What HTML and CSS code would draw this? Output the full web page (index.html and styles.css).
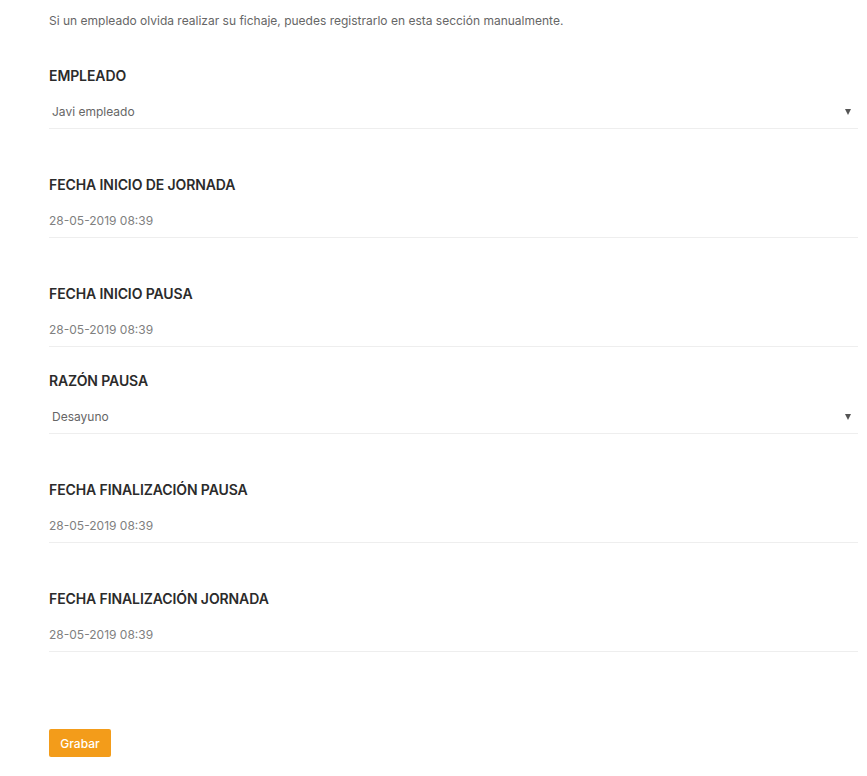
FILE: index.html
```html
<!DOCTYPE html>
<html lang="es">
<head>
<meta charset="utf-8"/>
<title>Fichaje manual</title>
<link rel="stylesheet" href="styles.css">
</head>
<body>
<div id="wrap">
    <p class="intro">Si un empleado olvida realizar su fichaje, puedes registrarlo en esta sección manualmente.</p>

    <form class="fichaje">
        <div class="field">
            <label>EMPLEADO</label>
            <div class="input select"><span>Javi empleado</span><i class="arrow"></i></div>
        </div>
        <div class="field date">
            <label>FECHA INICIO DE JORNADA</label>
            <div class="input">28-05-2019 08:39</div>
        </div>
        <div class="field date">
            <label>FECHA INICIO PAUSA</label>
            <div class="input">28-05-2019 08:39</div>
        </div>
        <div class="field">
            <label>RAZÓN PAUSA</label>
            <div class="input select"><span>Desayuno</span><i class="arrow"></i></div>
        </div>
        <div class="field date">
            <label>FECHA FINALIZACIÓN PAUSA</label>
            <div class="input">28-05-2019 08:39</div>
        </div>
        <div class="field date">
            <label>FECHA FINALIZACIÓN JORNADA</label>
            <div class="input">28-05-2019 08:39</div>
        </div>
        <div class="actions">
            <button type="button" class="btn">Grabar</button>
        </div>
    </form>
</div>
</body>
</html>
```

FILE: styles.css
```css
body,p,form{margin:0;padding:0;}
body{background:#fff;font-family:Inter,"Noto Sans",sans-serif;}
#wrap{width:809px;padding:12px 0 0 49px;}
.intro{font-size:12px;line-height:18px;color:#666;}
.fichaje{padding-top:12px;}
.field{margin-top:24px;}
.field.date{padding-top:22px;}
.field label{display:block;height:20px;line-height:20px;font-size:14px;font-weight:600;color:#2b2b2b;margin-bottom:10px;letter-spacing:-0.1px;}
.input{height:32px;line-height:32px;font-size:12px;color:#808080;border-bottom:1px solid #eee;}
.input.select{display:flex;justify-content:space-between;align-items:center;color:#666;padding-left:3px;}
.arrow{width:0;height:0;border-left:3px solid transparent;border-right:3px solid transparent;border-top:6px solid #555;margin-right:7px;}
.actions{padding-top:77px;}
.btn{width:62px;height:28px;border:0;border-radius:2px;background:#f39c1a;color:#fff;font-family:inherit;font-size:12px;font-weight:500;padding:0;cursor:pointer;}
```
